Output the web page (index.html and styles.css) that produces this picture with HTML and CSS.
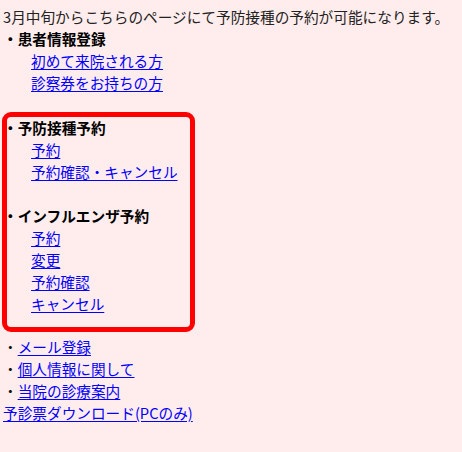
FILE: index.html
```html
<!DOCTYPE html>
<html lang="ja">
<head>
    <meta charset="UTF-8">
    <title>予防接種予約</title>
    <link rel="stylesheet" href="styles.css">
</head>
<body>
    <p class="notice">3月中旬からこちらのページにて予防接種の予約が可能になります。</p>

    <div class="section">
        <div class="heading">・患者情報登録</div>
        <a class="sub" href="#">初めて来院される方</a>
        <a class="sub" href="#">診察券をお持ちの方</a>
    </div>

    <div class="highlight">
        <div class="section">
            <div class="heading">・予防接種予約</div>
            <a class="sub" href="#">予約</a>
            <a class="sub" href="#">予約確認・キャンセル</a>
        </div>
        <div class="section spaced">
            <div class="heading">・インフルエンザ予約</div>
            <a class="sub" href="#">予約</a>
            <a class="sub" href="#">変更</a>
            <a class="sub" href="#">予約確認</a>
            <a class="sub" href="#">キャンセル</a>
        </div>
    </div>

    <ul class="menu">
        <li>・<a href="#">メール登録</a></li>
        <li>・<a href="#">個人情報に関して</a></li>
        <li>・<a href="#">当院の診療案内</a></li>
    </ul>
    <a class="download" href="#">予診票ダウンロード(PCのみ)</a>
</body>
</html>
```

FILE: styles.css
```css
*, *::before, *::after {
    margin: 0;
    padding: 0;
    box-sizing: border-box;
}

body {
    background-color: #ffecec;
    color: #111;
    font-family: "Noto Sans CJK JP", "Noto Sans", sans-serif;
    font-size: 14.67px;
    line-height: 22px;
    padding: 6px 3px;
}

a {
    color: #0000ff;
    text-decoration: underline;
    text-underline-offset: 2px;
}

.notice {
    color: #222;
}

.heading {
    font-weight: 700;
    color: #000;
}

.sub {
    display: block;
    width: max-content;
    margin-left: 28px;
}

.spaced {
    margin-top: 22px;
}

/* red frame around the reservation links */
.highlight {
    position: relative;
    width: 188px;
    margin-top: 23px;
    margin-bottom: 21px;
}

.highlight::before {
    content: "";
    position: absolute;
    left: -1px;
    top: -5px;
    width: 193px;
    bottom: -17px;
    border: 5px solid #ff0000;
    border-radius: 9px;
    pointer-events: none;
}

.menu {
    list-style: none;
}

.download {
    display: inline-block;
}
```
